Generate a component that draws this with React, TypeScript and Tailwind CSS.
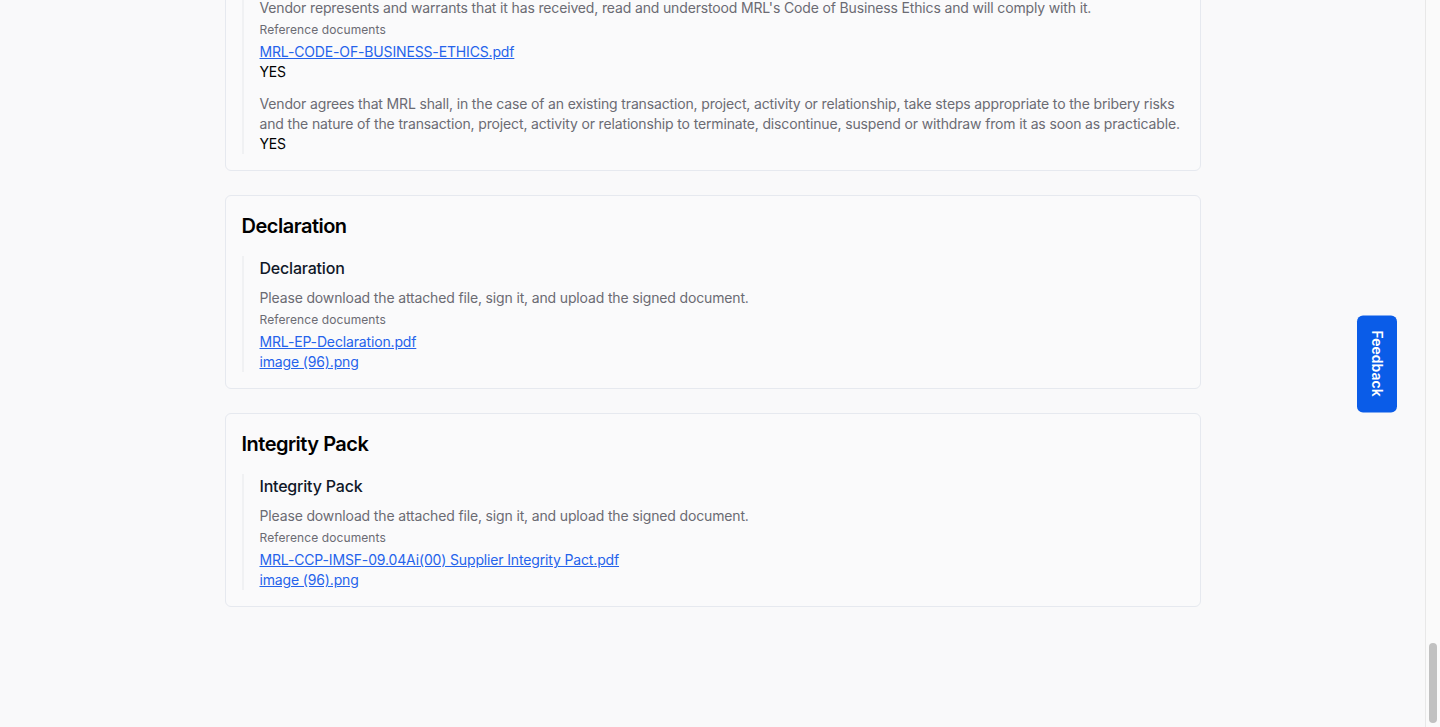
import React from 'react';

type Item = {
  title?: string;
  text: string;
  docs?: string[];
  answer?: string;
};

type Section = {
  title: string;
  items: Item[];
};

const sections: Section[] = [
  {
    title: 'Business Ethics',
    items: [
      {
        text: 'Vendor confirms that it has not offered, promised or given any bribe or improper advantage to any MRL employee or representative.',
        answer: 'YES',
      },
      {
        text: "Vendor represents and warrants that it has received, read and understood MRL's Code of Business Ethics and will comply with it.",
        docs: ['MRL-CODE-OF-BUSINESS-ETHICS.pdf'],
        answer: 'YES',
      },
      {
        text: 'Vendor agrees that MRL shall, in the case of an existing transaction, project, activity or relationship, take steps appropriate to the bribery risks and the nature of the transaction, project, activity or relationship to terminate, discontinue, suspend or withdraw from it as soon as practicable.',
        answer: 'YES',
      },
    ],
  },
  {
    title: 'Declaration',
    items: [
      {
        title: 'Declaration',
        text: 'Please download the attached file, sign it, and upload the signed document.',
        docs: ['MRL-EP-Declaration.pdf', 'image (96).png'],
      },
    ],
  },
  {
    title: 'Integrity Pack',
    items: [
      {
        title: 'Integrity Pack',
        text: 'Please download the attached file, sign it, and upload the signed document.',
        docs: ['MRL-CCP-IMSF-09.04Ai(00) Supplier Integrity Pact.pdf', 'image (96).png'],
      },
    ],
  },
];

const QuestionItem = ({ item }: { item: Item }) => (
  <div>
    {item.title && (
      <h3 className="text-base leading-6 font-medium tracking-[-0.2px] text-gray-900 mb-2">{item.title}</h3>
    )}
    <p className="text-sm leading-5 tracking-[-0.15px] text-[#6b6b73]">{item.text}</p>
    {item.docs && (
      <div>
        <div className="mt-1 text-xs leading-4 tracking-[0.1px] text-[#6b6b73]">Reference documents</div>
        <div className="mt-1 flex flex-col items-start">
          {item.docs.map((d) => (
            <a key={d} href="#" className="text-sm leading-5 tracking-[-0.15px] text-[#2563eb] underline">
              {d}
            </a>
          ))}
        </div>
      </div>
    )}
    {item.answer && <div className="text-sm leading-5 tracking-[-0.15px] text-black">{item.answer}</div>}
  </div>
);

const SectionCard = ({ section }: { section: Section }) => (
  <div className="rounded-md border border-[#e6e9ef] bg-[#fafafb] p-4">
    <h2 className="text-xl leading-7 font-semibold tracking-[-0.5px] text-black">{section.title}</h2>
    <div className="mt-4 border-l-2 border-[#f0f1f3] pl-4 flex flex-col gap-3">
      {section.items.map((item, i) => (
        <QuestionItem key={i} item={item} />
      ))}
    </div>
  </div>
);

export default function App() {
  return (
    <div className="h-[727px] flex bg-[#f9f9fa] font-['Inter','Noto_Sans',sans-serif] overflow-hidden">
      {/* Page content, scrolled to the bottom */}
      <div className="relative flex-1 flex flex-col justify-end overflow-hidden">
        <div className="mx-auto w-full max-w-5xl px-6 pb-[120px] flex flex-col gap-6">
          {sections.map((s) => (
            <SectionCard key={s.title} section={s} />
          ))}
        </div>

        {/* Feedback tab */}
        <button className="absolute right-[28px] top-1/2 -translate-y-1/2 w-10 h-[97px] rounded-md bg-[#0a5ce8] text-white text-sm font-semibold flex items-center justify-center">
          <span className="[writing-mode:vertical-rl]">Feedback</span>
        </button>
      </div>

      {/* Scrollbar */}
      <div className="w-[15px] h-full border-l border-[#e8e8e8] bg-[#fafafa] flex flex-col justify-end pb-[4px] pl-[3px]">
        <div className="w-2 h-[80px] rounded-full bg-[#c1c1c1]" />
      </div>
    </div>
  );
}
